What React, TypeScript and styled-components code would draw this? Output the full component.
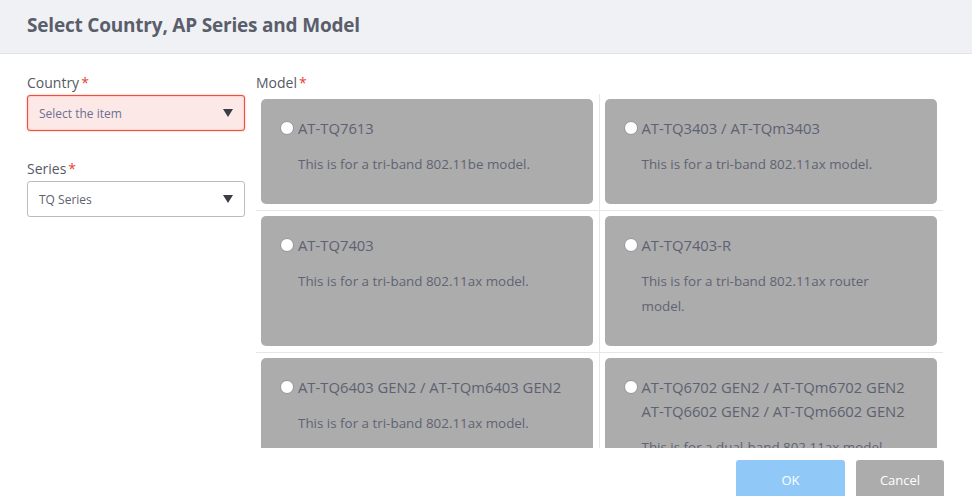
import React from "react";
import styled, { createGlobalStyle } from "styled-components";

const Global = createGlobalStyle`
  html, body { margin: 0; padding: 0; background: #ffffff; overflow: hidden; }
  body { font-family: "Open Sans", "Noto Sans", sans-serif; }
  * { box-sizing: border-box; }
`;

const Page = styled.div`
  width: 972px;
  height: 496px;
  display: flex;
  flex-direction: column;
  overflow: hidden;
`;

const Header = styled.div`
  height: 54px;
  flex: none;
  background: #f0f1f5;
  border-bottom: 1px solid #e2e3e8;
  display: flex;
  align-items: center;
  padding: 0 27px 3px;
`;

const Title = styled.h1`
  margin: 0;
  font-size: 19px;
  font-weight: 700;
  color: #5a5e6b;
  letter-spacing: -0.2px;
`;

const Content = styled.div`
  height: 394px;
  flex: none;
  display: flex;
  gap: 11px;
  padding: 19px 29px 0 27px;
  overflow: hidden;
`;

const Side = styled.div`
  width: 218px;
  flex: none;
  display: flex;
  flex-direction: column;
  gap: 28px;
`;

const Field = styled.div`
  display: flex;
  flex-direction: column;
`;

const Label = styled.label`
  font-size: 14px;
  line-height: 20px;
  color: #555a63;
  margin-bottom: 2px;
`;

const Star = styled.span`
  color: #e5432f;
  margin-left: 2px;
`;

const Select = styled.div<{ $error?: boolean }>`
  height: 36px;
  border-radius: 3px;
  border: 1px solid ${(p) => (p.$error ? "#e8523f" : "#b9bcc2")};
  background: ${(p) => (p.$error ? "#fde8e8" : "#ffffff")};
  box-shadow: ${(p) => (p.$error ? "inset 0 0 2px rgba(232,82,63,0.45), 0 0 2px rgba(232,82,63,0.5)" : "none")};
  display: flex;
  align-items: center;
  justify-content: space-between;
  padding: 0 11px 0 11px;
  font-size: 12px;
  color: ${(p) => (p.$error ? "#6b7190" : "#5d6170")};
`;

const Arrow = styled.span`
  width: 0;
  height: 0;
  border-left: 5.5px solid transparent;
  border-right: 5.5px solid transparent;
  border-top: 8px solid #3a3d44;
`;

const Main = styled.div`
  flex: 1;
  display: flex;
  flex-direction: column;
  min-width: 0;
`;

const Grid = styled.div`
  flex: 1;
  overflow: hidden;
  display: grid;
  grid-template-columns: minmax(0, 1fr) minmax(0, 1fr);
  align-content: start;
  margin-top: -1px;
`;

const Cell = styled.div<{ $left?: boolean }>`
  padding: 5px 6px 6px 5px;
  border-bottom: 1px solid #e6e7ea;
  border-right: ${(p) => (p.$left ? "1px solid #e6e7ea" : "none")};
  display: flex;
  min-width: 0;
`;

const Card = styled.div`
  flex: 1;
  min-width: 0;
  background: #acacac;
  border-radius: 5px;
  padding: 17px 34px 27px 19px;
  display: flex;
  align-items: flex-start;
`;

const Radio = styled.span`
  width: 14px;
  height: 14px;
  margin: 5px 4px 0 0;
  flex: none;
  border-radius: 50%;
  background: #ffffff;
  border: 1px solid #94949c;
`;

const Body = styled.div`
  display: flex;
  flex-direction: column;
  min-width: 0;
`;

const Name = styled.div`
  font-size: 14.8px;
  line-height: 24px;
  color: #5d6172;
  white-space: nowrap;
`;

const Desc = styled.div`
  margin-top: 12px;
  font-size: 13.4px;
  line-height: 25px;
  color: #5f6373;
`;

const Footer = styled.div`
  flex: none;
  display: flex;
  justify-content: flex-end;
  gap: 11px;
  padding: 12px 28px 0;
`;

const Button = styled.button<{ $primary?: boolean }>`
  height: 40px;
  width: ${(p) => (p.$primary ? "109px" : "88px")};
  border: none;
  border-radius: 3px;
  background: ${(p) => (p.$primary ? "#90c9f8" : "#acacac")};
  color: #ffffff;
  font-family: "Open Sans", "Noto Sans", sans-serif;
  font-size: 13px;
  padding: 0;
`;

const models: { name: string[]; desc: string }[] = [
  { name: ["AT-TQ7613"], desc: "This is for a tri-band 802.11be model." },
  { name: ["AT-TQ3403 / AT-TQm3403"], desc: "This is for a tri-band 802.11ax model." },
  { name: ["AT-TQ7403"], desc: "This is for a tri-band 802.11ax model." },
  { name: ["AT-TQ7403-R"], desc: "This is for a tri-band 802.11ax router model." },
  { name: ["AT-TQ6403 GEN2 / AT-TQm6403 GEN2"], desc: "This is for a tri-band 802.11ax model." },
  {
    name: ["AT-TQ6702 GEN2 / AT-TQm6702 GEN2", "AT-TQ6602 GEN2 / AT-TQm6602 GEN2"],
    desc: "This is for a dual-band 802.11ax model.",
  },
];

export default function App() {
  return (
    <Page>
      <Global />
      <Header>
        <Title>Select Country, AP Series and Model</Title>
      </Header>
      <Content>
        <Side>
          <Field>
            <Label>
              Country<Star>*</Star>
            </Label>
            <Select $error>
              <span>Select the item</span>
              <Arrow />
            </Select>
          </Field>
          <Field>
            <Label>
              Series<Star>*</Star>
            </Label>
            <Select>
              <span>TQ Series</span>
              <Arrow />
            </Select>
          </Field>
        </Side>
        <Main>
          <Label>
            Model<Star>*</Star>
          </Label>
          <Grid>
            {models.map((m, i) => (
              <Cell key={i} $left={i % 2 === 0}>
                <Card>
                  <Radio />
                  <Body>
                    <Name>
                      {m.name.map((n, j) => (
                        <div key={j}>{n}</div>
                      ))}
                    </Name>
                    <Desc>{m.desc}</Desc>
                  </Body>
                </Card>
              </Cell>
            ))}
          </Grid>
        </Main>
      </Content>
      <Footer>
        <Button $primary>OK</Button>
        <Button>Cancel</Button>
      </Footer>
    </Page>
  );
}
